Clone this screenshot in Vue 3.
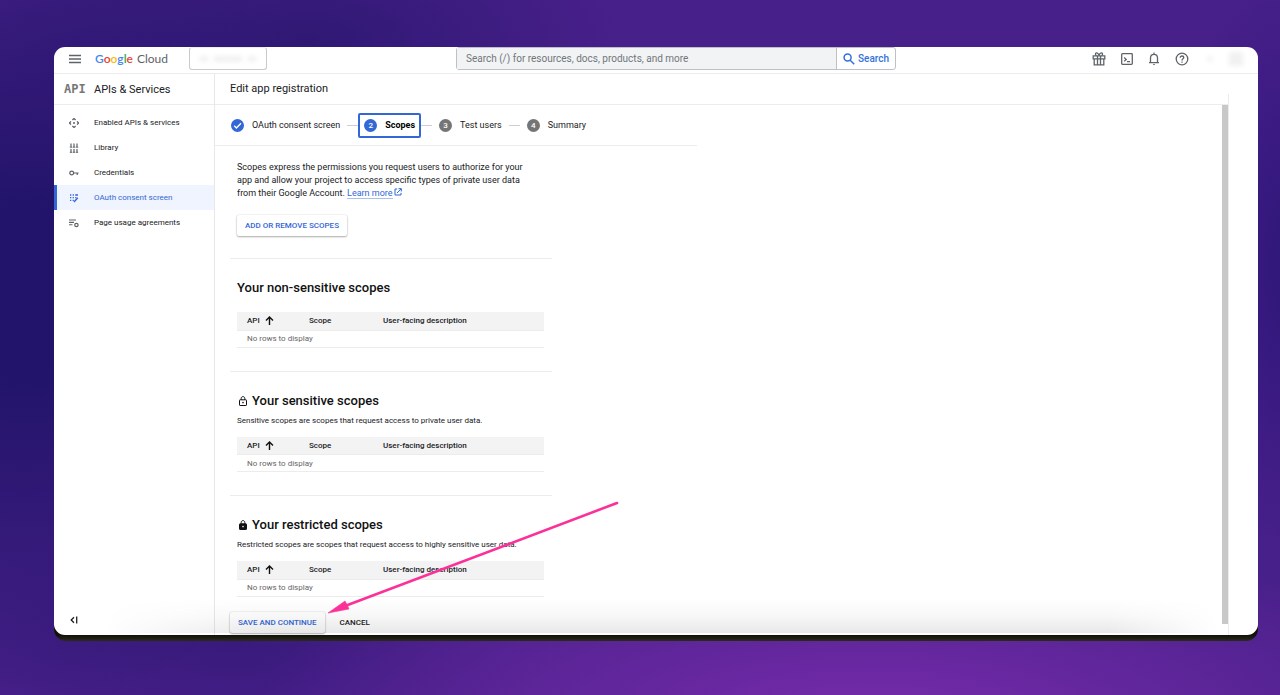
<script setup>
import { ref } from 'vue';

const query = ref('');
const activeNav = ref('consent');

const logoLetters = [
  { char: 'G', color: 'blue' },
  { char: 'o', color: 'red' },
  { char: 'o', color: 'yellow' },
  { char: 'g', color: 'blue' },
  { char: 'l', color: 'green' },
  { char: 'e', color: 'red' },
];

const navItems = [
  { id: 'enabled', label: 'Enabled APIs & services' },
  { id: 'library', label: 'Library' },
  { id: 'credentials', label: 'Credentials' },
  { id: 'consent', label: 'OAuth consent screen' },
  { id: 'agreements', label: 'Page usage agreements' },
];

const steps = [
  { label: 'OAuth consent screen', state: 'done' },
  { label: 'Scopes', state: 'current' },
  { label: 'Test users', state: 'next' },
  { label: 'Summary', state: 'next' },
];

const sections = [
  { id: 'non-sensitive', title: 'Your non-sensitive scopes' },
  {
    id: 'sensitive',
    title: 'Your sensitive scopes',
    text: 'Sensitive scopes are scopes that request access to private user data.',
  },
  {
    id: 'restricted',
    title: 'Your restricted scopes',
    text: 'Restricted scopes are scopes that request access to highly sensitive user data.',
  },
];
</script>

<template>
  <div class="desktop">
    <div class="frame">
      <div class="window">
        <header class="topbar">
          <button class="icon-btn menu" aria-label="Main menu">
            <svg width="12" height="10" viewBox="0 0 12 10">
              <path d="M0 1.5h12M0 5h12M0 8.5h12" stroke="#5f6368" stroke-width="1.3" />
            </svg>
          </button>
          <a class="logo" href="#">
            <span class="google"><span v-for="(letter, i) in logoLetters" :key="i" :class="letter.color">{{ letter.char }}</span></span>
            <span class="cloud">Cloud</span>
          </a>
          <button class="project" aria-label="Select a project">
            <span class="smudge small"></span>
            <span class="smudge"></span>
            <span class="smudge small"></span>
          </button>
          <form class="search" @submit.prevent>
            <input v-model="query" type="text" aria-label="Search" placeholder="Search (/) for resources, docs, products, and more" />
            <button type="submit">
              <svg width="12" height="12" viewBox="0 0 12 12" fill="none" stroke="#3372dc" stroke-width="1.5">
                <circle cx="4.6" cy="4.6" r="3.5" />
                <path d="M7.2 7.2l4 4" />
              </svg>
              Search
            </button>
          </form>
          <div class="tools">
            <button class="icon-btn" aria-label="Free trial">
              <svg width="14" height="14" viewBox="0 0 14 14" fill="none" stroke="#5f6368" stroke-width="1.3">
                <path d="M1.2 3.8h11.6v3H1.2zM2.2 6.8v6h9.6v-6M5.5 3.8v9M8.5 3.8v9" />
                <path d="M7 3.6C6.4 1.6 5.4.8 4.5.9 3 1.1 3.2 3.4 4.5 3.7M7 3.6C7.6 1.6 8.6.8 9.5.9c1.5.2 1.3 2.5 0 2.8" />
              </svg>
            </button>
            <button class="icon-btn" aria-label="Activate Cloud Shell">
              <svg width="12" height="12" viewBox="0 0 12 12" fill="none" stroke="#5f6368" stroke-width="1.3">
                <rect x=".7" y=".7" width="10.6" height="10.6" rx=".8" />
                <path d="M3.2 4.6l2 1.8-2 1.8M6 8.7h3" />
              </svg>
            </button>
            <button class="icon-btn" aria-label="Notifications">
              <svg width="12" height="14" viewBox="0 0 12 14" fill="none" stroke="#5f6368" stroke-width="1.3">
                <path d="M1 10.7h10M2.5 10.7V6c0-2.2 1.4-3.7 3.5-3.7S9.5 3.8 9.5 6v4.7M6 .6v1.6" />
                <path d="M4.7 12h2.6L6 13.3z" fill="#5f6368" stroke="none" />
              </svg>
            </button>
            <button class="icon-btn" aria-label="Help">
              <svg width="14" height="14" viewBox="0 0 14 14" fill="none" stroke="#5f6368" stroke-width="1.3">
                <circle cx="7" cy="7" r="5.8" />
                <path d="M5.2 5.7c0-1 .8-1.7 1.8-1.7s1.8.7 1.8 1.6C8.8 6.8 7 6.9 7 8.4M7 9.4v1.3" />
              </svg>
            </button>
            <span class="smudge dot"></span>
            <span class="smudge avatar"></span>
          </div>
        </header>

        <div class="body">
          <aside class="sidebar">
            <div class="product">
              <span class="api-mark">API</span>
              <h2>APIs &amp; Services</h2>
            </div>
            <nav>
              <a
                v-for="item in navItems"
                :key="item.id"
                href="#"
                :class="{ active: item.id === activeNav }"
                @click.prevent="activeNav = item.id">
                <svg width="10" height="10" viewBox="0 0 10 10" fill="none" stroke="currentColor">
                  <g v-if="item.id === 'enabled'">
                    <path d="M3.4 2L5 .5 6.6 2M3.4 8L5 9.5 6.6 8M2 3.4L.5 5 2 6.6M8 3.4L9.5 5 8 6.6" stroke-width="1.3" />
                    <circle cx="5" cy="5" r="1" fill="currentColor" stroke="none" />
                  </g>
                  <g v-else-if="item.id === 'library'">
                    <path d="M2 .5v3.5M5 .5v3.5M8 .5v3.5M2 6v3M5 6v3M8 6v3" stroke-width="1.2" />
                    <path d="M.8 4.2h2.4M3.8 4.2h2.4M6.8 4.2h2.4M.8 9.3h2.4M3.8 9.3h2.4M6.8 9.3h2.4" />
                  </g>
                  <g v-else-if="item.id === 'credentials'" stroke-width="1.2">
                    <circle cx="2.7" cy="5" r="1.9" />
                    <path d="M4.6 5h5M8.2 5v2" />
                  </g>
                  <g v-else-if="item.id === 'consent'">
                    <path d="M1 2h1.3M3.6 2h1.3M6.2 2h2.8M1 4.7h1.3M3.6 4.7h1.3M6.2 4.7h1.3M1 7.4h1.3M3.6 7.4h1.3" stroke-width="1.3" />
                    <path d="M5 9l3.8-4.2" stroke-width="1.4" />
                  </g>
                  <g v-else>
                    <path d="M0 2h7M0 4.4h5M0 6.8h3.5" stroke-width="1.1" />
                    <circle cx="7.4" cy="7" r="1.7" stroke-width="1.2" />
                  </g>
                </svg>
                {{ item.label }}
              </a>
            </nav>
            <button class="icon-btn collapse" aria-label="Hide navigation">
              <svg width="8" height="8" viewBox="0 0 8 8" fill="none" stroke="#202124" stroke-width="1.3">
                <path d="M4 1.2L1.2 4 4 6.8M6.7.5v7" />
              </svg>
            </button>
          </aside>

          <main>
            <h1>Edit app registration</h1>
            <div class="viewport">
              <div class="content">
                <ol class="steps">
                  <li v-for="(step, i) in steps" :key="step.label" :class="step.state">
                    <button>
                      <span class="badge">
                        <svg v-if="step.state === 'done'" width="9" height="9" viewBox="0 0 9 9" fill="none" stroke="#fff" stroke-width="1.4">
                          <path d="M1.2 4.7l2.2 2.2L8 2.3" />
                        </svg>
                        <template v-else>{{ i + 1 }}</template>
                      </span>
                      {{ step.label }}
                    </button>
                  </li>
                </ol>

                <div class="column">
                  <section class="intro">
                    <p>
                      Scopes express the permissions you request users to authorize for your app and allow your project to access specific types
                      of private user data from their Google Account.
                      <a href="#">Learn more</a>
                      <svg width="8" height="8" viewBox="0 0 8 8" fill="none" stroke="#3367d6">
                        <path d="M3.2 1H1v6h6V4.8M4.5.7h2.8v2.8M7.2.8L3 5" />
                      </svg>
                    </p>
                    <button class="raised">ADD OR REMOVE SCOPES</button>
                  </section>

                  <section v-for="section in sections" :key="section.id" class="scopes">
                    <h3>
                      <svg v-if="section.id !== 'non-sensitive'" width="8" height="10" viewBox="0 0 8 10" fill="none" stroke="#111">
                        <rect x=".5" y="3.8" width="7" height="5.7" rx=".6" :fill="section.id === 'restricted' ? '#111' : 'none'" />
                        <path d="M2.2 3.8V2.4c0-2.4 3.6-2.4 3.6 0v1.4" />
                        <circle cx="4" cy="6.6" r=".8" :fill="section.id === 'restricted' ? '#fff' : '#111'" stroke="none" />
                      </svg>
                      {{ section.title }}
                    </h3>
                    <p v-if="section.text">{{ section.text }}</p>
                    <table>
                      <thead>
                        <tr>
                          <th class="api">
                            API
                            <svg width="9" height="9" viewBox="0 0 9 9" fill="none" stroke="#111" stroke-width="1.4">
                              <path d="M4.5 9V1M1 4.5L4.5 1 8 4.5" />
                            </svg>
                          </th>
                          <th class="scope">Scope</th>
                          <th>User-facing description</th>
                        </tr>
                      </thead>
                      <tbody>
                        <tr>
                          <td colspan="3">No rows to display</td>
                        </tr>
                      </tbody>
                    </table>
                  </section>

                  <div class="actions">
                    <button class="raised">SAVE AND CONTINUE</button>
                    <button class="flat">CANCEL</button>
                  </div>
                </div>
              </div>
              <div class="scrollbar"></div>
            </div>
          </main>

          <div class="rail"></div>
        </div>

        <div class="shade"></div>
        <!-- pointer to the save button -->
        <svg class="arrow" width="296" height="116" viewBox="0 0 296 116">
          <path d="M290 3L18 106" stroke="#fb3199" stroke-width="2.6" stroke-linecap="round" />
          <path d="M1 113L18 101Q20 104 22 109z" fill="#fb3199" stroke="#fb3199" stroke-width=".6" />
        </svg>
      </div>
    </div>
  </div>
</template>

<style>
body {
  margin: 0;
}
</style>

<style scoped>
* {
  box-sizing: border-box;
}
.desktop {
  min-height: 100vh;
  padding: 47px 22px 54px 54px;
  font-family: Roboto, sans-serif;
  font-size: 8px;
  color: #202124;
  display: flex;
  background:
    radial-gradient(ellipse 620px 180px at 68% 103%, #762baa 0%, rgba(118, 43, 170, 0) 100%),
    radial-gradient(ellipse 340px 420px at 2% 42%, #22146a 20%, rgba(34, 20, 106, 0) 100%),
    radial-gradient(ellipse 160px 300px at 102% 38%, #30177a 10%, rgba(48, 23, 122, 0) 100%),
    radial-gradient(ellipse 320px 140px at 24% 6%, #2f1874 0%, rgba(47, 24, 116, 0) 100%),
    radial-gradient(ellipse 300px 120px at 18% 92%, #391a7c 0%, rgba(57, 26, 124, 0) 100%),
    #48208a;
}
button,
input {
  font-family: inherit;
  color: inherit;
  margin: 0;
}
button {
  border: 0;
  padding: 0;
  background: none;
  cursor: pointer;
}
h1,
h2,
h3,
p,
ol {
  margin: 0;
  padding: 0;
}
a {
  text-decoration: none;
}
.frame {
  flex: 1;
  display: flex;
  padding-bottom: 6px;
  border-radius: 12px;
  background: linear-gradient(#11110a 0 99%, #2c2a1c 100%);
}
.window {
  position: relative;
  flex: 1;
  min-width: 0;
  display: flex;
  flex-direction: column;
  overflow: hidden;
  border-radius: 11px;
  background: #fff;
}
.icon-btn {
  display: flex;
}

/* top bar */
.topbar {
  display: flex;
  align-items: flex-start;
  height: 27px;
  border-bottom: 1px solid #ececec;
}
.menu {
  margin: 7px 14px 0 15px;
}
.logo {
  display: flex;
  gap: 4px;
  width: 94px;
  font-family: Lato, sans-serif;
  font-size: 12px;
  line-height: 23px;
}
.cloud {
  color: #5f6368;
}
.google {
  font-weight: 600;
}
.blue {
  color: #4285f4;
}
.red {
  color: #ea4335;
}
.yellow {
  color: #fbbc04;
}
.green {
  color: #34a853;
}
.project {
  display: flex;
  align-items: center;
  justify-content: center;
  gap: 6px;
  width: 78px;
  height: 23px;
  border: 1px solid #c8cace;
  border-top-color: #eee;
  border-radius: 3px;
}
.smudge {
  width: 28px;
  height: 6px;
  background: #f1f1f1;
  filter: blur(2px);
}
.smudge.small {
  width: 8px;
}
.search {
  display: flex;
  width: 440px;
  height: 23px;
  margin-left: 189px;
  border: 1px solid #bdc1c6;
  border-radius: 3px;
}
.search input {
  flex: 1;
  min-width: 0;
  padding: 0 9px;
  border: 0;
  border-right: 1px solid #bdc1c6;
  background: #f1f3f4;
  font-size: 10px;
  outline: none;
}
.search input::placeholder {
  color: #72767b;
  opacity: 1;
}
.search button {
  display: flex;
  align-items: center;
  justify-content: center;
  gap: 3px;
  width: 58px;
  font-size: 10px;
  font-weight: 500;
  color: #3372dc;
}
.tools {
  display: flex;
  align-items: center;
  gap: 15px;
  height: 23px;
  margin: 0 15px 0 auto;
}
.smudge.dot {
  width: 4px;
  margin: 0 2px 0 4px;
}
.smudge.avatar {
  width: 14px;
  height: 14px;
}

.body {
  flex: 1;
  display: flex;
}

/* sidebar */
.sidebar {
  display: flex;
  flex-direction: column;
  width: 161px;
  border-right: 1px solid #e8e8e8;
}
.product {
  display: flex;
  align-items: center;
  gap: 9px;
  height: 31px;
  padding-left: 10px;
  border-bottom: 1px solid #ececec;
}
.product h2,
h1 {
  font-size: 11px;
  font-weight: 400;
}
.api-mark {
  width: 21px;
  font-family: 'DejaVu Sans Mono', monospace;
  font-size: 12px;
  font-weight: 700;
  color: #777;
}
nav {
  padding-top: 5px;
}
nav a {
  display: flex;
  align-items: center;
  gap: 15px;
  height: 25px;
  padding-left: 12px;
  border-left: 3px solid transparent;
  color: #202124;
}
nav svg {
  color: #5f6368;
}
nav a.active {
  border-left-color: #3367d6;
  background: #eff4fe;
}
nav a.active,
nav a.active svg {
  color: #3367d6;
}
.collapse {
  margin: auto 0 11px 16px;
}

/* main area */
main {
  flex: 1;
  min-width: 0;
  display: flex;
  flex-direction: column;
}
h1 {
  height: 31px;
  padding-left: 15px;
  line-height: 30px;
  border-bottom: 1px solid #ececec;
}
.viewport {
  flex: 1;
  display: flex;
}
.content {
  flex: 1;
  min-width: 0;
}
.scrollbar {
  width: 6px;
  margin-bottom: 11px;
  background: #c8c8c8;
}
.rail {
  width: 30px;
  margin-top: 20px;
  border-left: 1px solid #ececec;
}
.steps {
  display: flex;
  align-items: center;
  max-width: 482px;
  height: 41px;
  padding-left: 9px;
  border-bottom: 1px solid #ececec;
  list-style: none;
}
.steps li {
  display: flex;
  align-items: center;
}
.steps li + li::before {
  content: '';
  width: 11px;
  height: 1px;
  background: #cfcfcf;
}
.steps button {
  display: flex;
  align-items: center;
  gap: 8px;
  height: 25px;
  padding: 0 7px;
  font-size: 9px;
}
.steps .current button {
  padding: 0 4px;
  border: 2px solid #3367d6;
  border-radius: 2px;
  font-weight: 700;
  color: #000;
}
.badge {
  display: flex;
  align-items: center;
  justify-content: center;
  width: 13px;
  height: 13px;
  border-radius: 50%;
  background: #3367d6;
  font-size: 8px;
  font-weight: 500;
  color: #fff;
}
.next .badge {
  background: #757575;
}
.column {
  max-width: 337px;
  padding-left: 15px;
}
.intro {
  height: 113px;
  padding: 15px 8px 0 7px;
  border-bottom: 1px solid #ececec;
}
.intro p {
  max-width: 300px;
  font-size: 9px;
  line-height: 13px;
}
.intro a {
  margin-right: 1px;
  border-bottom: 1px solid #a9c0ee;
  color: #3367d6;
}
.raised {
  height: 21px;
  padding: 0 8px;
  border-radius: 2px;
  background: #fff;
  box-shadow:
    0 1px 2px rgba(0, 0, 0, 0.3),
    0 0 2px rgba(0, 0, 0, 0.14);
  font-size: 8px;
  font-weight: 500;
  color: #3367d6;
}
.intro .raised {
  margin-top: 15px;
}
.scopes {
  padding: 20px 8px 23px 7px;
  border-bottom: 1px solid #ececec;
}
.scopes:nth-last-of-type(1) {
  padding-bottom: 15px;
  border-bottom: 0;
}
h3 {
  display: flex;
  align-items: center;
  gap: 5px;
  font-size: 13px;
  font-weight: 500;
  line-height: 18px;
  color: #111;
}
h3 svg {
  margin-left: 2px;
}
.scopes p {
  line-height: 12px;
  margin-top: 5px;
}
table {
  width: 100%;
  margin-top: 10px;
  border-collapse: collapse;
  table-layout: fixed;
  text-align: left;
}
h3 + table {
  margin-top: 15px;
}
th,
td {
  height: 18px;
  padding: 0 0 0 10px;
  border-bottom: 1px solid #ececec;
}
th {
  background: #f3f3f3;
  font-size: 8px;
  font-weight: 500;
}
th svg {
  margin-left: 3px;
  vertical-align: middle;
}
td {
  height: 17px;
  color: #666;
}
.api {
  width: 62px;
}
.scope {
  width: 74px;
}
.actions {
  display: flex;
  align-items: center;
  gap: 15px;
  padding-bottom: 2px;
}
.flat {
  font-size: 8px;
  font-weight: 500;
}

.shade {
  position: absolute;
  right: 40px;
  bottom: 2px;
  left: 50px;
  height: 34px;
  background: linear-gradient(rgba(0, 0, 0, 0), rgba(0, 0, 0, 0.03) 50%, rgba(0, 0, 0, 0.09));
  mask-image: linear-gradient(90deg, transparent, #000 160px calc(100% - 110px), transparent);
  pointer-events: none;
}
.arrow {
  position: absolute;
  top: 453px;
  left: 273px;
  pointer-events: none;
}
</style>
